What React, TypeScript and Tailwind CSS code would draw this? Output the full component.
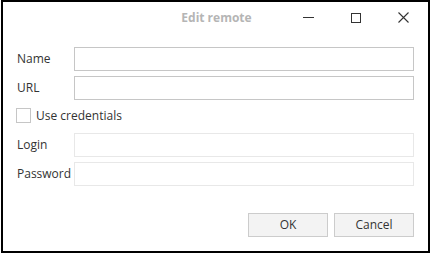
import React from 'react';

function Field({ label, disabled }: { label: string; disabled?: boolean }) {
  return (
    <>
      <label className="text-[12px] text-[#333333] leading-none">{label}</label>
      <div
        className={
          disabled
            ? 'h-[24px] border border-[#e8e8e8] bg-white'
            : 'h-[24px] border border-[#c6c6c6] bg-white'
        }
      />
    </>
  );
}

export default function App() {
  return (
    <div
      className="w-[430px] h-[253px] bg-white overflow-hidden"
      style={{ fontFamily: '"Open Sans", "Noto Sans", sans-serif' }}
    >
      <div className="ml-px w-[429px] h-[253px] border-2 border-black flex flex-col">
        {/* Title bar */}
        <div className="h-[31px] grid grid-cols-[1fr_auto_1fr] items-center">
          <div />
          <div className="text-[12px] font-bold text-[#b5b5b5] pl-[2px]">Edit remote</div>
          <div className="flex justify-end h-full">
            <div className="w-[48px] flex items-center justify-center">
              <div className="w-[11px] h-px bg-[#333333]" />
            </div>
            <div className="w-[48px] flex items-center justify-center">
              <div className="w-[10px] h-[10px] border border-[#333333]" />
            </div>
            <div className="w-[48px] flex items-center justify-center pr-[1px]">
              <svg width="11" height="11" viewBox="0 0 11 11">
                <path d="M0.5 0.5 L10.5 10.5 M10.5 0.5 L0.5 10.5" stroke="#333333" strokeWidth="1.1" />
              </svg>
            </div>
          </div>
        </div>

        {/* Form */}
        <div className="px-[14px] pt-[14px] flex flex-col">
          <div className="grid grid-cols-[57px_1fr] items-center gap-y-[5px]">
            <Field label="Name" />
            <Field label="URL" />
          </div>
          <div className="flex items-center gap-[5px] mt-[8px] ml-[-1px]">
            <div className="w-[15px] h-[15px] border border-[#c6c6c6] bg-white" />
            <span className="text-[12px] text-[#333333] leading-none">Use credentials</span>
          </div>
          <div className="grid grid-cols-[57px_1fr] items-center gap-y-[5px] mt-[10px]">
            <Field label="Login" disabled />
            <Field label="Password" disabled />
          </div>
          <div className="flex justify-end gap-[6px] mt-[27px]">
            <button className="w-[80px] h-[24px] border border-[#cccccc] bg-[#f3f3f3] text-[12px] text-[#333333]">
              OK
            </button>
            <button className="w-[80px] h-[24px] border border-[#cccccc] bg-[#f3f3f3] text-[12px] text-[#333333]">
              Cancel
            </button>
          </div>
        </div>
      </div>
    </div>
  );
}
